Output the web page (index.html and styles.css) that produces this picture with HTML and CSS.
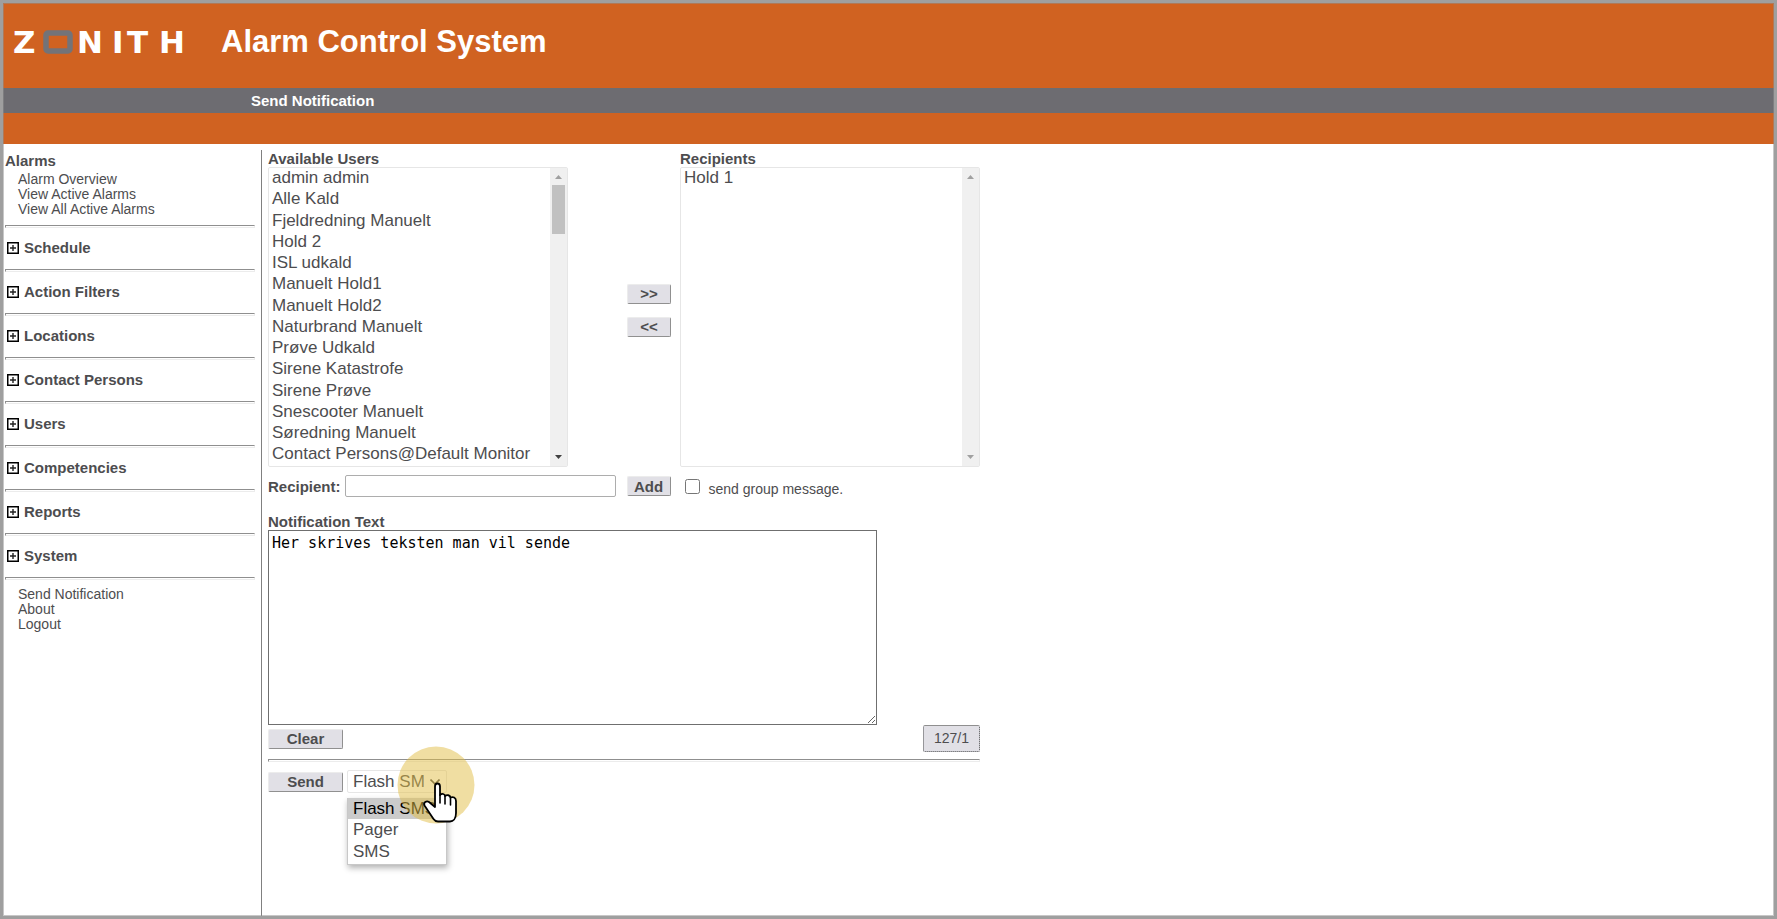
FILE: index.html
```html
<!DOCTYPE html>
<html lang="en">
<head>
<meta charset="utf-8">
<title>Alarm Control System - Send Notification</title>
<link rel="stylesheet" href="styles.css">
</head>
<body>
<svg class="defs" aria-hidden="true">
  <symbol id="plus" viewBox="0 0 12 12"><path d="M0 0H12V12H0Z" fill="#000"/><path d="M1.500 1.500H10.500V10.500H1.500Z" fill="#fff"/><path d="M6 3V9M3 6H9" stroke="#222" stroke-width="1.400"/></symbol>
  <symbol id="up" viewBox="0 0 7 4"><path d="M0 4L3.5 0L7 4Z" fill="currentColor"/></symbol>
  <symbol id="down" viewBox="0 0 7 4"><path d="M0 0L3.5 4L7 0Z" fill="currentColor"/></symbol>
</svg>
<div class="page">
  <header class="header">
    <div class="brand">
      <svg class="logo" viewBox="0 0 174 40" role="img" aria-label="Zonith">
        <text class="wordmark" y="31" x="0 30 64 99 114 146">Z NITH</text>
        <rect x="33" y="11" width="24" height="18" rx="2" fill="none" stroke="#737378" stroke-width="5.500"/>
      </svg>
      <h1 class="title">Alarm Control System</h1>
    </div>
    <div class="crumb">Send Notification</div>
    <div class="strip"></div>
  </header>
  <div class="body">
    <nav class="side">
      <div class="side-title">Alarms</div>
      <ul class="links">
        <li><a href="#">Alarm Overview</a></li>
        <li><a href="#">View Active Alarms</a></li>
        <li><a href="#">View All Active Alarms</a></li>
      </ul>
      <hr class="rule">
      <a class="group" href="#"><svg class="plus"><use href="#plus"/></svg>Schedule</a>
      <hr class="rule">
      <a class="group" href="#"><svg class="plus"><use href="#plus"/></svg>Action Filters</a>
      <hr class="rule">
      <a class="group" href="#"><svg class="plus"><use href="#plus"/></svg>Locations</a>
      <hr class="rule">
      <a class="group" href="#"><svg class="plus"><use href="#plus"/></svg>Contact Persons</a>
      <hr class="rule">
      <a class="group" href="#"><svg class="plus"><use href="#plus"/></svg>Users</a>
      <hr class="rule">
      <a class="group" href="#"><svg class="plus"><use href="#plus"/></svg>Competencies</a>
      <hr class="rule">
      <a class="group" href="#"><svg class="plus"><use href="#plus"/></svg>Reports</a>
      <hr class="rule">
      <a class="group" href="#"><svg class="plus"><use href="#plus"/></svg>System</a>
      <hr class="rule">
      <ul class="links links-end">
        <li><a href="#">Send Notification</a></li>
        <li><a href="#">About</a></li>
        <li><a href="#">Logout</a></li>
      </ul>
    </nav>
    <main class="main">
      <form class="form">
        <div class="pickers">
          <div class="picker">
            <label class="label" for="available">Available Users</label>
            <div class="listbox">
              <select class="list" id="available" multiple size="14">
                <option>admin admin</option>
                <option>Alle Kald</option>
                <option>Fjeldredning Manuelt</option>
                <option>Hold 2</option>
                <option>ISL udkald</option>
                <option>Manuelt Hold1</option>
                <option>Manuelt Hold2</option>
                <option>Naturbrand Manuelt</option>
                <option>Prøve Udkald</option>
                <option>Sirene Katastrofe</option>
                <option>Sirene Prøve</option>
                <option>Snescooter Manuelt</option>
                <option>Søredning Manuelt</option>
                <option>Contact Persons@Default Monitor</option>
              </select>
              <div class="scroll" aria-hidden="true"><svg class="arrow"><use href="#up"/></svg><div class="thumb"></div><svg class="arrow arrow-on"><use href="#down"/></svg></div>
            </div>
          </div>
          <div class="movers">
            <button class="btn" type="button">&gt;&gt;</button>
            <button class="btn" type="button">&lt;&lt;</button>
          </div>
          <div class="picker">
            <label class="label" for="recipients">Recipients</label>
            <div class="listbox">
              <select class="list" id="recipients" multiple size="14">
                <option>Hold 1</option>
              </select>
              <div class="scroll" aria-hidden="true"><svg class="arrow"><use href="#up"/></svg><svg class="arrow"><use href="#down"/></svg></div>
            </div>
          </div>
        </div>
        <div class="add-row">
          <label class="label" for="recipient">Recipient:</label>
          <input class="field" id="recipient" type="text">
          <button class="btn add" type="button">Add</button>
          <input class="check" id="groupmsg" type="checkbox">
          <label class="check-label" for="groupmsg">send group message.</label>
        </div>
        <label class="label" for="message">Notification Text</label>
        <textarea class="message" id="message" spellcheck="false">Her skrives teksten man vil sende</textarea>
        <div class="tools">
          <button class="btn wide" type="button">Clear</button>
          <output class="counter" for="message">127/1</output>
        </div>
        <hr class="rule">
        <div class="send-row">
          <button class="btn wide" type="button">Send</button>
          <div class="kind">
            <select class="combo" aria-label="Message type">
              <option>Flash SMS</option>
              <option>Pager</option>
              <option>SMS</option>
            </select>
            <svg class="chevron" viewBox="0 0 10 6"><path d="M0.500 0.500L5 5L9.500 0.500" fill="none" stroke="#444" stroke-width="1.600"/></svg>
            <ul class="menu" role="listbox">
              <li class="choice chosen" role="option" aria-selected="true">Flash SMS</li>
              <li class="choice" role="option">Pager</li>
              <li class="choice" role="option">SMS</li>
            </ul>
            <svg class="pointer" viewBox="0 0 78 78" aria-hidden="true">
              <circle cx="39" cy="39" r="38.500" fill="#e2bd45" fill-opacity=".5"/>
              <path d="M38 57V40.500C38 36.500 43 36.500 43 40.500V49C45 47 48 48 48 50C50 48.500 53 49 53.500 51.500C56 50.500 59 51.500 59 55V67C59 73 56 75.500 53 75.500H41C38.500 75.500 37.500 74.500 36.500 73L27.500 59.500C26 56.500 29.500 54.500 32 56L38 61Z" fill="#fff" stroke="#000" stroke-width="1.800" stroke-linejoin="round"/>
              <path d="M43 49V57M48 50V58M53.500 51.500V59" stroke="#000" stroke-width="1.600" stroke-linecap="round"/>
            </svg>
          </div>
        </div>
      </form>
    </main>
  </div>
</div>
</body>
</html>
```
FILE: styles.css
```css
* { box-sizing: border-box; }
body {
  margin: 0;
  font: 14px/15px "Liberation Sans", Arial, sans-serif;
  color: #4d4d4f;
  background: #fff;
}
ul { list-style: none; margin: 0; padding: 0; }
a { color: inherit; text-decoration: none; }
.defs { display: none; }
.page {
  position: relative;
  display: flex;
  flex-direction: column;
  min-height: 100vh;
  border: 3px solid #9f9f9f;
}
.page::after {
  content: "";
  position: absolute;
  inset: 0;
  border: 1px solid rgba(144, 144, 144, .5);
  pointer-events: none;
}
.header { background: #d06221; color: #fff; }
.brand { display: flex; align-items: center; gap: 34px; height: 85px; padding: 0 10px 7px; }
.logo { width: 174px; height: 40px; overflow: visible; }
.wordmark { font: bold 31px "DejaVu Sans", sans-serif; fill: #fff; white-space: pre; }
.title { margin: 0; font-size: 31px; line-height: 36px; }
.crumb { padding: 0 248px; background: #6d6c71; font-size: 15px; font-weight: bold; line-height: 25px; }
.strip { height: 31px; }

.body { display: flex; flex: 1; padding: 6px 2px 0; }
.side { width: 257px; padding: 2px 6px 0 0; border-right: 1px solid #808080; }
.side-title { font-size: 15px; font-weight: bold; line-height: 17px; }
.links { padding: 3px 0 8px 13px; font-size: 14px; }
.links-end { padding: 7px 0 0 13px; }
.rule { height: 3px; margin: 0; border: 1px solid; border-color: #8f8f8f #ececec #ececec #8f8f8f; }
.group { display: flex; align-items: center; gap: 5px; height: 41px; padding: 0 0 2px 2px; font-size: 15px; font-weight: bold; }
.plus { width: 12px; height: 12px; }

.main { flex: 1; padding-left: 6px; }
.form { max-width: 712px; }
.label { display: block; font-size: 15px; font-weight: bold; line-height: 17px; }
.pickers { display: flex; justify-content: space-between; }
.picker { width: 300px; }
.listbox { display: flex; height: 300px; border: 1px solid #e6e6e6; border-radius: 2px; }
.list {
  flex: 1;
  min-width: 0;
  padding: 0;
  border: 0;
  outline: 0;
  overflow: hidden;
  background: #fff;
  color: #4d4d4f;
  font: 17px "Liberation Sans", Arial, sans-serif;
}
.list option { height: 1.25em; padding: 0 3px; }
.scroll {
  display: flex;
  flex-direction: column;
  align-items: center;
  width: 17px;
  padding: 7px 0;
  background: #f0f0f0;
  color: #a0a0a0;
}
.arrow { width: 7px; height: 4px; }
.arrow:last-child { margin-top: auto; }
.arrow-on { color: #404040; }
.thumb { width: 13px; height: 49px; margin-top: 6px; background: #c1c1c1; }
.movers { display: flex; flex-direction: column; justify-content: center; gap: 13px; width: 44px; padding-top: 3px; margin-left: 50px; }
.btn {
  height: 20px;
  padding: 0;
  border: 1px solid;
  border-color: #ececec #909090 #909090 #ececec;
  border-radius: 2px;
  background: #e1e0e6;
  color: #4d4d4f;
  font: bold 15px/17px "Liberation Sans", Arial, sans-serif;
}
.add-row { display: flex; align-items: center; padding: 8px 0 16px; }
.field { width: 271px; height: 22px; margin-left: 4px; border: 1px solid #adadad; border-radius: 2px; }
.add { width: 44px; margin-left: 11px; }
.check { width: 15px; height: 15px; margin: 0 9px 0 14px; }
.check-label { padding-top: 6px; }
.message {
  display: block;
  width: 609px;
  height: 195px;
  padding: 2px 3px;
  border: 1px solid #6f6f6f;
  border-radius: 0;
  color: #000;
  font: 15px/20px "DejaVu Sans Mono", monospace;
}
.tools { display: flex; justify-content: space-between; align-items: center; padding-bottom: 7px; }
.wide { width: 75px; }
.counter {
  padding: 5px 10px;
  border: 1px dotted #4d4d4f;
  border-top: 1px solid #8f8f8f;
  border-radius: 2px;
  background: #e1e0e6;
}
.send-row { display: flex; align-items: center; gap: 4px; padding-top: 8px; }
.kind { position: relative; width: 100px; }
.combo {
  display: block;
  width: 100%;
  height: 23px;
  padding: 0 22px 0 5px;
  border: 1px solid #e6e6e6;
  border-radius: 2px;
  appearance: none;
  background: #fff;
  color: #4d4d4f;
  font: 17px/21px "Liberation Sans", Arial, sans-serif;
}
.chevron { position: absolute; right: 7px; top: 9px; width: 10px; height: 6px; }
.menu {
  position: absolute;
  top: 28px;
  left: 0;
  width: 100%;
  padding-bottom: 2px;
  border: 1px solid #c8c8c8;
  border-top: 0;
  background: #fff;
  box-shadow: 1px 3px 6px rgba(0, 0, 0, .3);
  font-size: 17px;
  line-height: 1.25;
}
.choice { padding-left: 5px; }
.chosen { background: #cbcbcb; color: #000; }
.pointer { position: absolute; top: -24px; left: 50px; width: 78px; height: 78px; }
```
